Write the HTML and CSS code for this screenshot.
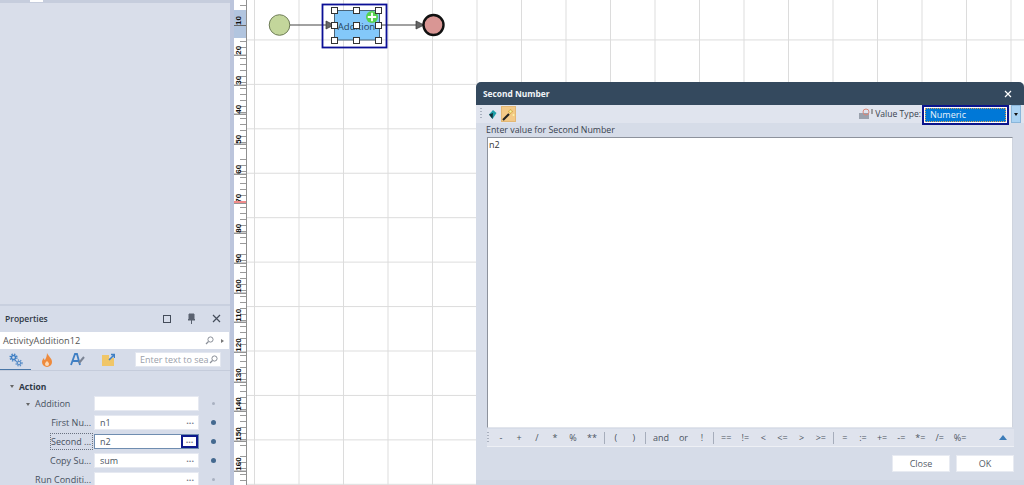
FILE: index.html
```html
<!DOCTYPE html>
<html lang="en">
<head>
  <meta charset="UTF-8">
  <title>Second Number</title>
  <link rel="stylesheet" href="styles.css">
</head>
<body>
  <div class="app">
    <!-- Left dock -->
    <aside class="dock">
      <div class="dock-top"><span class="dock-tab"></span></div>
      <div class="dock-empty"></div>
      <section class="props">
        <header class="props-head">
          <span class="props-title">Properties</span>
          <span class="props-ctl box"></span>
          <svg class="props-pin" width="9" height="11" viewBox="0 0 9 11"><path d="M2 1h5v5l1 1H1l1-1zM4.5 7v4" fill="#5a6270" stroke="#5a6270"/></svg>
          <svg class="props-x" width="9" height="9" viewBox="0 0 9 9"><path d="M1 1l7 7M8 1L1 8" stroke="#444c5a" stroke-width="1.2"/></svg>
        </header>
        <div class="obj-row">
          <span>ActivityAddition12</span>
          <svg width="9" height="9" viewBox="0 0 9 9"><circle cx="5.5" cy="3.5" r="2.6" fill="none" stroke="#8a8f98"/><path d="M3.5 5.5L1 8" stroke="#8a8f98" stroke-width="1.2"/></svg>
          <i class="obj-arrow"></i>
        </div>
        <div class="tabs">
          <span class="tab active">
            <svg width="14" height="14" viewBox="0 0 14 14">
              <circle cx="4.5" cy="4.5" r="2" fill="none" stroke="#3f7fc4" stroke-width="1.4"/>
              <circle cx="4.5" cy="4.5" r="3.4" fill="none" stroke="#3f7fc4" stroke-width="1.4" stroke-dasharray="1.4 1.3"/>
              <circle cx="10" cy="10" r="1.7" fill="none" stroke="#5c8fc8" stroke-width="1.3"/>
              <circle cx="10" cy="10" r="3" fill="none" stroke="#5c8fc8" stroke-width="1.3" stroke-dasharray="1.3 1.2"/>
            </svg>
          </span>
          <span class="tab">
            <svg width="12" height="14" viewBox="0 0 12 14"><path d="M6 0c1 3 5 5 5 9a5 5 0 0 1-10 0c0-2 1-3 2-4 0 2 1 2 1 2 1-2 2-4 2-7z" fill="#ee8a3c"/><path d="M6 8c1 1 2 2 2 3a2 2 0 0 1-4 0c0-1 1-2 2-3z" fill="#fbd9b5"/></svg>
          </span>
          <span class="tab">
            <svg width="15" height="14" viewBox="0 0 15 14"><path d="M1 12L5 1h2l3 11M3 8h6" fill="none" stroke="#3f7fc4" stroke-width="1.8"/><path d="M9 10l5-6" stroke="#7b8494" stroke-width="2"/></svg>
          </span>
          <span class="tab">
            <svg width="13" height="13" viewBox="0 0 13 13"><path d="M0 2h7v3h5v8H0z" fill="#f0c668"/><path d="M7 7l5-5M9 1.500h3.500V5" fill="none" stroke="#3f7fc4" stroke-width="1.500"/></svg>
          </span>
          <span class="search">
            <span>Enter text to sea</span>
            <svg width="9" height="9" viewBox="0 0 9 9"><circle cx="5.500" cy="3.500" r="2.600" fill="none" stroke="#8a8f98"/><path d="M3.500 5.500L1 8" stroke="#8a8f98" stroke-width="1.200"/></svg>
          </span>
        </div>
        <div class="tree">
          <div class="cat lvl-0"><i class="caret"></i>Action</div>
          <div class="row">
            <span class="name lvl-1"><i class="caret"></i>Addition</span>
            <span class="value"></span>
            <i class="dot faint"></i>
          </div>
          <div class="row">
            <span class="name right">First Nu...</span>
            <span class="value">n1<em>···</em></span>
            <i class="dot"></i>
          </div>
          <div class="row">
            <span class="name right focused">Second ...</span>
            <span class="value current">n2<em>···</em></span>
            <i class="dot"></i>
          </div>
          <div class="row">
            <span class="name right">Copy Su...</span>
            <span class="value">sum<em>···</em></span>
            <i class="dot"></i>
          </div>
          <div class="row">
            <span class="name right">Run Conditi...</span>
            <span class="value"><em>···</em></span>
            <i class="dot faint"></i>
          </div>
        </div>
      </section>
    </aside>

    <div class="splitter"></div>

    <!-- Ruler -->
    <div class="ruler">
      <span class="mark">10</span><span class="mark">20</span><span class="mark">30</span><span class="mark">40</span>
      <span class="mark">50</span><span class="mark">60</span><span class="mark">70</span><span class="mark">80</span>
      <span class="mark">90</span><span class="mark">100</span><span class="mark">110</span><span class="mark">120</span>
      <span class="mark">130</span><span class="mark">140</span><span class="mark">150</span><span class="mark">160</span>
      <i class="ruler-red"></i>
    </div>

    <!-- Canvas -->
    <main class="canvas">
      <svg class="diagram" width="220" height="60" viewBox="247 0 220 60">
        <path d="M290 25H326M379 25H416" stroke="#444" stroke-width="1.200"/>
        <path d="M326 21l8 4-8 4zM416 21l8 4-8 4z" fill="#666" stroke="#333" stroke-width=".7"/>
        <circle cx="279.500" cy="25" r="10.300" fill="#c3d69b" stroke="#6d7c55"/>
        <circle cx="433.500" cy="25" r="10" fill="#d99694" stroke="#111" stroke-width="2.400"/>
        <rect x="334.500" y="10.500" width="45" height="29.500" rx="1" fill="#83c8fa" stroke="#4a6478"/>
        <text x="356.500" y="30" text-anchor="middle" class="node-label">Addition</text>
        <circle cx="372" cy="17" r="6" fill="#55d24d"/>
        <path d="M372 12.800v8.400M367.800 17h8.400" stroke="#fff" stroke-width="1.800"/>
        <rect x="322.500" y="4.500" width="64" height="43" fill="none" stroke="#0b0f96" stroke-width="1.800"/>
        <g class="handles">
          <rect x="331.500" y="7.500" width="6" height="6"/><rect x="353.500" y="7.500" width="6" height="6"/><rect x="375.500" y="7.500" width="6" height="6"/>
          <rect x="331.500" y="22.500" width="6" height="6"/><rect x="353.500" y="22.500" width="6" height="6"/><rect x="375.500" y="22.500" width="6" height="6"/>
          <rect x="331.500" y="37.500" width="6" height="6"/><rect x="353.500" y="37.500" width="6" height="6"/><rect x="375.500" y="37.500" width="6" height="6"/>
        </g>
      </svg>

      <!-- Expression dialog -->
      <div class="dialog">
        <header class="dlg-title">
          <span>Second Number</span>
          <svg width="8" height="8" viewBox="0 0 8 8"><path d="M1 1l6 6M7 1L1 7" stroke="#fff" stroke-width="1.200"/></svg>
        </header>
        <div class="dlg-tools">
          <i class="grip"></i>
          <span class="tool">
            <svg width="9" height="11" viewBox="0 0 9 11"><path d="M5 1L8.500 4 4.500 10 1 5.500z" fill="#1e9fa8"/><path d="M4.500 10L1 5.500 5 4z" fill="#12303a"/></svg>
          </span>
          <span class="tool on">
            <svg width="13" height="13" viewBox="0 0 13 13"><path d="M1 12l6-6" stroke="#222" stroke-width="2.200"/><path d="M8.500 1l.7 1.800L11 3.500l-1.800.7L8.500 6l-.7-1.800L6 3.500l1.800-.7z" fill="#fbf6a8" stroke="#c79a2c" stroke-width=".5"/><circle cx="11.500" cy="7" r="1" fill="#fbf6a8"/></svg>
          </span>
          <span class="tools-fill"></span>
          <svg class="vt-icon" width="14" height="12" viewBox="0 0 14 12"><rect x="0" y="5" width="10" height="6" fill="#9aa1ad"/><circle cx="7" cy="4" r="3" fill="none" stroke="#d9877a"/><path d="M13 1v5" stroke="#555"/></svg>
          <span class="vt-label">Value Type:</span>
          <span class="combo"><span class="combo-text">Numeric</span></span>
          <span class="combo-btn"></span>
        </div>
        <div class="dlg-prompt">Enter value for Second Number</div>
        <div class="editor">n2</div>
        <div class="ops">
          <i class="grip"></i>
          <span class="op">-</span><span class="op">+</span><span class="op">/</span><span class="op">*</span><span class="op">%</span><span class="op">**</span>
          <b class="sep"></b>
          <span class="op">(</span><span class="op">)</span>
          <b class="sep"></b>
          <span class="op">and</span><span class="op">or</span><span class="op">!</span>
          <b class="sep"></b>
          <span class="op">==</span><span class="op">!=</span><span class="op">&lt;</span><span class="op">&lt;=</span><span class="op">&gt;</span><span class="op">&gt;=</span>
          <b class="sep"></b>
          <span class="op">=</span><span class="op">:=</span><span class="op">+=</span><span class="op">-=</span><span class="op">*=</span><span class="op">/=</span><span class="op">%=</span>
          <span class="tools-fill"></span>
          <i class="ops-up"></i>
        </div>
        <footer class="dlg-foot">
          <button type="button">Close</button>
          <button type="button">OK</button>
        </footer>
      </div>
    </main>
  </div>
</body>
</html>
```

FILE: styles.css
```css
/* General */
html, body {
    margin: 0;
    padding: 0;
    height: 100%;
    overflow: hidden;
}

body {
    font-family: "Open Sans", "Noto Sans", sans-serif;
    font-size: 9px;
    color: #2e3440;
    background: #fff;
}

.app {
    display: flex;
    width: 1024px;
    height: 485px;
}

/* Left dock */
.dock {
    width: 230px;
    flex: none;
    display: flex;
    flex-direction: column;
    background: #d9deea;
}

.dock-top {
    height: 3px;
    background: #c6cddd;
    padding-left: 30px;
}

.dock-tab {
    display: block;
    width: 13px;
    height: 2px;
    background: #fff;
}

.dock-empty {
    flex: 1;
    border-bottom: 2px solid #c9d0df;
}

.props {
    height: 179px;
    overflow: hidden;
    background: #d6dce9;
}

.props-head {
    display: flex;
    align-items: center;
    height: 26px;
    padding: 0 9px 1px 5px;
    box-sizing: border-box;
}

.props-title {
    flex: 1;
    font-size: 8.500px;
    font-weight: 600;
    color: #2f3845;
}

.props-ctl.box {
    width: 6px;
    height: 6px;
    border: 1px solid #444c5a;
    margin-right: 16px;
}

.props-pin {
    margin-right: 16px;
}

.obj-row {
    display: flex;
    align-items: center;
    height: 17px;
    background: #fff;
    padding: 0 5px 0 3px;
    font-size: 9.200px;
    color: #555;
    margin-right: 1px;
}

.obj-row span {
    flex: 1;
}

.obj-arrow {
    margin-left: 7px;
    border-left: 3px solid #777;
    border-top: 2.500px solid transparent;
    border-bottom: 2.500px solid transparent;
}

.tabs {
    display: flex;
    align-items: center;
    height: 22px;
    border-bottom: 1px solid #c5ccdb;
    box-sizing: border-box;
}

.tab {
    display: flex;
    align-items: center;
    justify-content: center;
    width: 31px;
    height: 21px;
}

.tab.active {
    box-shadow: inset 0 -1px 0 #4a77a8;
}

.search {
    display: flex;
    align-items: center;
    justify-content: space-between;
    box-sizing: border-box;
    width: 86px;
    height: 15px;
    margin-left: 11px;
    padding: 0 2px 0 4px;
    background: #fff;
    border: 1px solid #e3e7f0;
    color: #9aa0aa;
}

.tree {
    padding-top: 7px;
}

.cat {
    display: flex;
    align-items: center;
    height: 16px;
    font-size: 8.500px;
    font-weight: 700;
    color: #2f3845;
}

.lvl-0 {
    padding-left: 10px;
}

.caret {
    display: inline-block;
    width: 0;
    height: 0;
    margin-right: 5px;
    border-top: 3px solid #666;
    border-left: 2.500px solid transparent;
    border-right: 2.500px solid transparent;
}

.row {
    display: flex;
    align-items: center;
    height: 19px;
}

.name {
    box-sizing: border-box;
    width: 92px;
    height: 15px;
    line-height: 15px;
    color: #47505e;
    white-space: nowrap;
}

.name.lvl-1 {
    padding-left: 26px;
}

.name.lvl-1 .caret {
    vertical-align: middle;
}

.name.right {
    text-align: right;
    padding-right: 1px;
}

.name.focused {
    width: 41px;
    margin-left: 51px;
    outline: 1px dotted #6a7280;
}

.value {
    display: flex;
    align-items: center;
    justify-content: space-between;
    box-sizing: border-box;
    width: 105px;
    height: 15px;
    margin-left: 2px;
    padding: 0 4px 0 5px;
    background: #fff;
    border: 1px solid #e6e9f1;
    color: #4b5360;
}

.value em {
    margin-left: auto;
    font-style: normal;
    font-weight: 700;
    color: #778;
    line-height: 1;
}

.value.current {
    border-color: #6f8db0;
    padding-right: 0;
}

.value.current em {
    box-sizing: border-box;
    width: 17px;
    height: 13px;
    line-height: 10px;
    text-align: center;
    border: 2px solid #0d1a8c;
}

.dot {
    width: 5px;
    height: 5px;
    margin-left: 12px;
    border-radius: 50%;
    background: #44698f;
}

.dot.faint {
    width: 3px;
    height: 3px;
    margin-left: 13px;
    background: #a9b1c1;
}

/* Ruler */
.splitter {
    width: 4px;
    flex: none;
    background: #bcc5dc;
}

.ruler {
    position: relative;
    width: 12px;
    flex: none;
    display: flex;
    flex-direction: column;
    overflow: hidden;
    border-right: 1px solid #8f8f8f;
    background-color: #fff;
    background-image:
        linear-gradient(#b2c5df, #b2c5df),
        repeating-linear-gradient(#fff 0, #fff 5px, #9a9a9a 5px, #9a9a9a 5.940px);
    background-size: 100% 28px, 6px 100%;
    background-position: 0 10px, right top;
    background-repeat: no-repeat, no-repeat;
}

.mark {
    flex: none;
    height: 29.700px;
    box-sizing: border-box;
    display: flex;
    align-items: flex-start;
    justify-content: flex-start;
    padding: 0 1px 0 0;
    writing-mode: vertical-rl;
    transform: rotate(180deg);
    font-family: "Liberation Sans", sans-serif;
    font-size: 8px;
    font-weight: 700;
    line-height: 1;
    color: #111;
    border-top: 1px solid #666;
}

.mark:first-child {
    height: 26px;
}

.ruler-red {
    position: absolute;
    left: 0;
    right: 0;
    top: 201px;
    height: 2px;
    background: #f08a8a;
}

/* Canvas */
.canvas {
    position: relative;
    flex: 1;
    background-color: #fff;
    background-image:
        linear-gradient(90deg, #dcdcdc 1px, transparent 1px),
        linear-gradient(#dcdcdc 1px, transparent 1px);
    background-size: 44.500px 44.440px;
    background-position: 7px -5px;
}

.diagram {
    position: absolute;
    left: 0;
    top: 0;
}

.node-label {
    font-family: "Open Sans", sans-serif;
    font-size: 9.500px;
    fill: #26445c;
}

.handles rect {
    fill: #fff;
    stroke: #333;
    stroke-width: 1;
}

/* Dialog */
.dialog {
    position: absolute;
    left: 229px;
    top: 82px;
    width: 548px;
    height: 403px;
    display: flex;
    flex-direction: column;
    border-radius: 5px 5px 0 0;
    background: #d6dce8;
    box-shadow: inset 0 -5px 0 #d0d7e4;
    overflow: hidden;
}

.dlg-title {
    display: flex;
    align-items: center;
    justify-content: space-between;
    flex: none;
    height: 23px;
    padding: 0 12px 0 7px;
    background: #34495e;
    color: #f1f4f8;
    font-size: 8.400px;
    font-weight: 700;
}

.dlg-tools {
    display: flex;
    align-items: center;
    flex: none;
    height: 18px;
    padding: 0 3px 0 4px;
    background: #e0e4ee;
}

.grip {
    flex: none;
    width: 2px;
    height: 12px;
    margin-right: 3px;
    background: repeating-linear-gradient(#aab1bf 0, #aab1bf 1px, transparent 1px, transparent 3px);
}

.tool {
    display: flex;
    align-items: center;
    justify-content: center;
    width: 15px;
    height: 16px;
    margin-right: 1px;
}

.tool.on {
    background: #f3c987;
    border: 1px solid #e3b774;
    box-sizing: border-box;
}

.tools-fill {
    flex: 1;
}

.vt-icon {
    margin-right: 2px;
}

.vt-label {
    font-size: 8.600px;
    color: #39424f;
    margin-right: 1px;
}

.combo {
    box-sizing: border-box;
    display: flex;
    align-self: flex-start;
    width: 87px;
    height: 20px;
    padding: 1px;
    background: #fff;
    border: 2px solid #0b148c;
}

.combo-text {
    flex: 1;
    padding-left: 5px;
    line-height: 14px;
    background: #0078d7;
    color: #e9f3fb;
    outline: 1px dotted #e0a050;
    outline-offset: -1px;
}

.combo-btn {
    position: relative;
    flex: none;
    width: 10px;
    height: 18px;
    margin-left: 2px;
    background: #a9d2f3;
    border: 1px solid #8ab6da;
    box-sizing: border-box;
}

.combo-btn::after {
    content: "";
    position: absolute;
    left: 2px;
    top: 7px;
    border-top: 3px solid #111;
    border-left: 2.500px solid transparent;
    border-right: 2.500px solid transparent;
}

.dlg-prompt {
    flex: none;
    height: 14px;
    line-height: 14px;
    padding-left: 10px;
    font-size: 8.800px;
    color: #39424f;
}

.editor {
    flex: none;
    box-sizing: border-box;
    width: 526px;
    height: 291px;
    margin-left: 11px;
    padding: 0 1px;
    background: #fff;
    border: 1px solid #8d929c;
    border-bottom-color: #e2e5ec;
    border-right-color: #cfd4de;
    color: #333;
}

.ops {
    display: flex;
    align-items: center;
    flex: none;
    box-sizing: border-box;
    width: 527px;
    height: 18px;
    margin: 1px 0 0 11px;
    background: #dfe3ed;
    border-bottom: 1px solid #eef0f5;
    color: #4b5360;
}

.op {
    padding: 0 5px;
    min-width: 8px;
    text-align: center;
    white-space: nowrap;
    font-size: 9px;
}

.sep {
    width: 1px;
    height: 12px;
    background: #a6adbb;
    margin: 0 2px;
}

.ops-up {
    margin-right: 7px;
    border-bottom: 5px solid #3d7cb8;
    border-left: 4px solid transparent;
    border-right: 4px solid transparent;
}

.dlg-foot {
    display: flex;
    justify-content: flex-end;
    gap: 6px;
    padding: 8px 10px 0 0;
}

.dlg-foot button {
    box-sizing: border-box;
    width: 58px;
    height: 17px;
    padding: 0;
    font: inherit;
    color: #555c68;
    background: #fff;
    border: 1px solid #e8ebf2;
}
```
